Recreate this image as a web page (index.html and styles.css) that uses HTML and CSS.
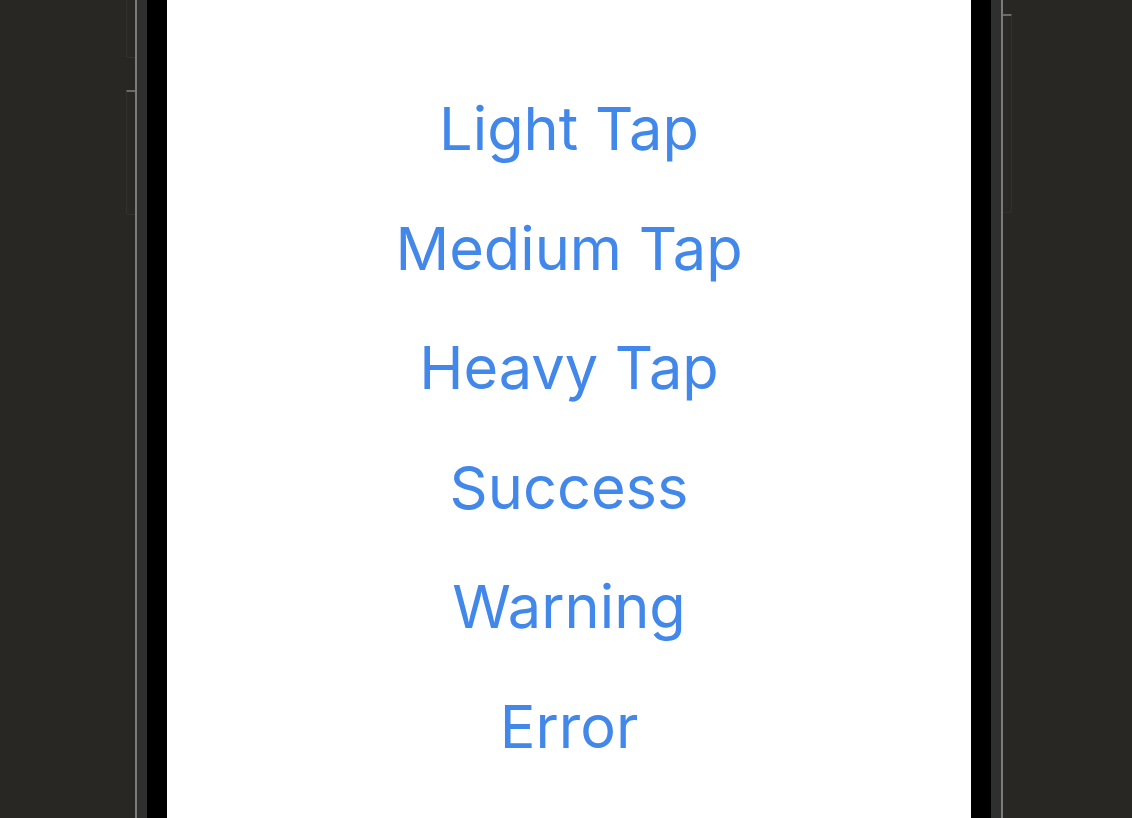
FILE: index.html
```html
<!DOCTYPE html>
<html>
<head>
<meta charset="utf-8">
<link rel="stylesheet" href="styles.css">
</head>
<body>
<div class="frame">
  <div class="side side-left">
    <div class="hw-btn hw-btn-a"></div>
    <div class="hw-btn hw-btn-b"></div>
  </div>
  <div class="edge-line"></div>
  <div class="edge-band"></div>
  <div class="bezel"></div>
  <main class="screen">
    <a class="action">Light Tap</a>
    <a class="action">Medium Tap</a>
    <a class="action">Heavy Tap</a>
    <a class="action">Success</a>
    <a class="action">Warning</a>
    <a class="action">Error</a>
  </main>
  <div class="bezel"></div>
  <div class="edge-band"></div>
  <div class="edge-line"></div>
  <div class="side side-right">
    <div class="hw-btn hw-btn-c"></div>
  </div>
</div>
</body>
</html>
```
FILE: styles.css
```css
html, body {
  margin: 0;
  padding: 0;
  height: 100%;
  background: #282723;
  overflow: hidden;
}
.frame {
  display: flex;
  height: 818px;
  width: 1132px;
}
.side {
  position: relative;
  background: #282723;
}
.side-left { width: 135px; }
.side-right { flex: 1; }
.edge-line {
  width: 2px;
  background: #7b7b7b;
}
.edge-band {
  width: 10px;
  background: #2f2f2f;
}
.bezel {
  width: 20px;
  background: #000;
}
.screen {
  width: 804px;
  background: #fff;
  display: flex;
  flex-direction: column;
  align-items: center;
  padding-top: 69px;
  box-sizing: border-box;
}
.action {
  display: block;
  height: 119.6px;
  line-height: 119.6px;
  font-family: "Inter", "Liberation Sans", sans-serif;
  font-size: 59.5px;
  font-weight: 400;
  letter-spacing: 0;
  color: #4287ea;
  white-space: nowrap;
}
.hw-btn {
  position: absolute;
  width: 8px;
  border: 1px solid #32312e;
  background: #292825;
}
.hw-btn-a {
  right: 0;
  top: -4px;
  height: 60px;
  border-right: none;
  border-radius: 0 0 0 3px;
}
.hw-btn-b {
  right: 0;
  top: 90px;
  height: 122px;
  border-right: none;
  border-top: 2px solid #6a6a6a;
  border-radius: 0 0 0 3px;
}
.hw-btn-c {
  left: 0;
  top: 14px;
  height: 196px;
  border-left: none;
  border-top: 2px solid #6a6a6a;
  border-radius: 0 0 3px 0;
}
```
